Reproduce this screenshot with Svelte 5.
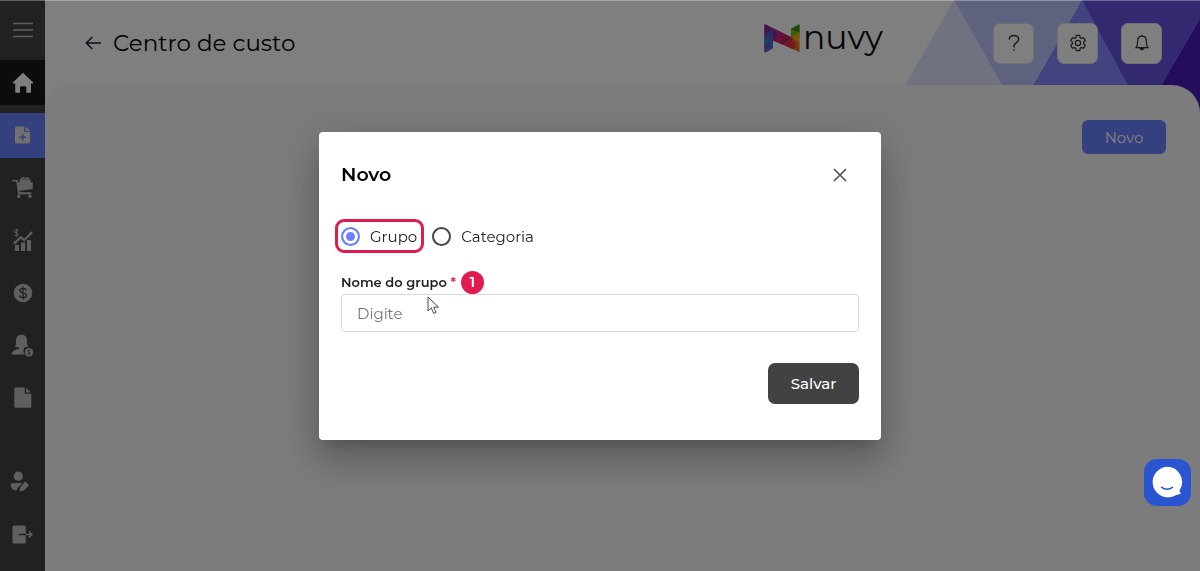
<script lang="ts">
  let kind = $state('grupo');
  let name = $state('');
</script>

<div class="app">
  <aside class="sidebar">
    <button class="side-btn menu" aria-label="Menu">
      <svg width="20" height="18" viewBox="0 0 20 18" stroke="currentColor" stroke-width="1.700"><path d="M0 2.500h20M0 9h20M0 15.500h20" /></svg>
    </button>
    <nav class="main-nav">
      <a class="side-btn home" href="#inicio" aria-label="Início">
        <svg width="22" height="22" viewBox="0 0 22 22" fill="currentColor"><path d="M11 .8 21.2 10.600q.5.7-.5.9H19v8.300q0 1-1 1h-3.700V15.500q0-1.200-1.200-1.200H9.200Q8 14.300 8 15.500v5.300H4.200q-1 0-1-1v-8.300H1.300q-1-.2-.5-.9z" /></svg>
      </a>
      <a class="side-btn current" href="#cadastros" aria-label="Cadastros">
        <svg width="16" height="18" viewBox="0 0 16 18" fill="currentColor"><path fill-rule="evenodd" d="M1.500.5H9v4.700q0 .8.800.8H15v10q0 1.500-1.500 1.500h-12Q0 17.500 0 16V2Q0 .5 1.500.5zM6.800 8v2.500H4.300v1.600h2.500v2.500h1.600v-2.500h2.500v-1.600H8.400V8z" /><path d="M10.300.6 15 4.900h-4.700z" /></svg>
      </a>
      <a class="side-btn" href="#compras" aria-label="Compras">
        <svg width="22" height="23" viewBox="0 0 22 23" fill="currentColor"><path d="M1 4.800h4l1.800 12.300h12" fill="none" stroke="currentColor" stroke-width="1.600" stroke-linecap="round" /><path d="M5 6.200h15.800V13L6.300 15zM7.500 3.300h11v3h-11zM9 1.300h3l1 1 1-1h3v1.500H9z" /><circle cx="6.700" cy="20.300" r="1.700" /><circle cx="18" cy="20.300" r="1.700" /><path d="M6 16.800h12.500v1.600H6z" /></svg>
      </a>
      <a class="side-btn" href="#vendas" aria-label="Vendas">
        <svg width="20" height="24" viewBox="0 0 20 24" fill="currentColor"><path d="M2 17h4v6H2zM8 14.500h4.200V23H8zM14 12h4v11h-4z" /><path d="m2 14.500 6-5.300 3.200 3L18 5.300" fill="none" stroke="currentColor" stroke-width="2" /><circle cx="18" cy="5" r="1.500" /><circle cx="2" cy="14.500" r="1.500" /><path d="M5.400 3.200C4.700 1.500 1.200 1.600 1.300 3.400c0 2 4.200 1 4.200 3.100C5.400 8.300 1.700 8.300 1 6.500M3.400.7v8.500" fill="none" stroke="currentColor" stroke-width="1" /></svg>
      </a>
      <a class="side-btn" href="#financeiro" aria-label="Financeiro">
        <svg width="20" height="20" viewBox="0 0 20 20"><circle cx="10" cy="10" r="9.300" fill="currentColor" /><path d="M13.300 7.300c-.5-2.600-6.300-2.700-6.400.2 0 3 6.600 1.600 6.500 4.900-.2 3-6.500 2.900-6.900.1M10 3.500v13" fill="none" stroke="#424242" stroke-width="1.300" /></svg>
      </a>
      <a class="side-btn" href="#clientes" aria-label="Clientes">
        <svg width="23" height="23" viewBox="0 0 23 23" fill="currentColor"><path d="M10.500.7c4 0 5.600 2.700 5.500 6 0 3 .3 5 1.200 6l-4.200.7v1.700c-.5.800-.6 1.600-.5 2.300.1 1.500.5 2.300 1.100 3.100H.8c0-4.500 4.200-4.600 7.200-5.800v-1.300l-4.200-.7c1-1.200 1.200-3 1.200-6 0-3.500 1.600-6 5.500-6z" /><circle cx="18" cy="18.300" r="4.200" /><path d="M19.400 17c-.3-1.100-2.800-1.100-2.800.1s2.900.9 2.800 2.200c0 1.200-2.700 1.300-3 .1" fill="none" stroke="#424242" stroke-width=".9" /></svg>
      </a>
      <a class="side-btn" href="#documentos" aria-label="Documentos">
        <svg width="18" height="21" viewBox="0 0 18 21" fill="currentColor"><path d="M1.500.5h9.200v6.200h6.600v12.800q0 1.200-1.200 1.200H1.500q-1.200 0-1.200-1.200V1.700Q.3.500 1.500.5z" /><path d="m12 .9 4.900 4.700H12z" /></svg>
      </a>
    </nav>
    <nav class="foot-nav">
      <a class="side-btn" href="#perfil" aria-label="Perfil">
        <svg class="profile" width="20" height="21" viewBox="0 0 20 21" fill="currentColor"><circle cx="8.300" cy="5.200" r="4.600" /><path d="M4 12h8.500L7.400 17.200 7 19.500C3 19.300.6 17 .7 14c.1-1.400 1.400-2 3.300-2z" /><path d="m15 10.500 3 2.600c.8.700.7 1.500 0 2.300l-4.200 4.200-4.300 1 .8-4.400z" /></svg>
      </a>
      <a class="side-btn" href="#sair" aria-label="Sair">
        <svg width="21" height="19" viewBox="0 0 21 19" fill="currentColor"><path d="M2 .6h10.300q1.500 0 1.500 1.500v6.600H7v1.600h6.800V17q0 1.500-1.500 1.500H2Q.5 18.500.5 17V2.100Q.5.600 2 .6z" /><path d="M14 9.500h5.700M17 6.600l2.900 2.900-2.900 2.900" fill="none" stroke="currentColor" stroke-width="1.500" /></svg>
      </a>
    </nav>
  </aside>

  <div class="page">
    <svg class="backdrop-art" width="295" height="115" viewBox="905 0 295 115" aria-hidden="true">
      <path fill="#e2e5ff" d="m954 0 49 85v30H888z" />
      <path fill="#bcc4ff" d="M954 0h128l-49 85v30h-14z" />
      <path fill="#8688ff" d="m1082 0 65 115h-131z" />
      <path fill="#6652e2" d="M1082 0h118v18l-56 97z" />
      <path fill="#4a1abc" d="M1200 18v97h-56z" />
    </svg>
    <header class="topbar">
      <button class="back" aria-label="Voltar">
        <svg width="17" height="14" viewBox="0 0 17 14" fill="none" stroke="currentColor" stroke-width="1.500"><path d="M16 7H1.500M7.300 1 1.300 7l6 6" /></svg>
      </button>
      <h1>Centro de custo</h1>
      <div class="logo">
        <svg width="36" height="29" viewBox="0 0 36 29" aria-hidden="true">
          <defs>
            <clipPath id="mark"><path d="M1.500.3 27 13V4.500L34.500.4q1-.2 1 .8v26q0 1-1 .6L9 16.500V24l-7.500 4.500q-1 0-1-1V1.300q0-1 1-1z" /></clipPath>
          </defs>
          <g clip-path="url(#mark)">
            <path fill="#b31a9b" d="M0 0h18v29H0z" />
            <path fill="#8427a0" d="M0 0v13l9-7zM9 5v12l9-6z" />
            <path fill="#4f5fbe" d="m0 12 9-7v19l-9 5z" />
            <path fill="#3f7bc4" d="m0 13 9 4-9 6z" />
            <path fill="#5966dd" d="m0 29 9-12v9z" />
            <path fill="#d71e7a" d="m9 5 9 4v12l-9-5 5-5z" />
            <path fill="#e62b50" d="M18 8h9v18l-9-6z" />
            <path fill="#bb2463" d="m18 9 9 4-9 8z" />
            <path fill="#79b51c" d="M27 0h9v14h-9z" />
            <path fill="#38961a" d="m27 5 9-5v9z" />
            <path fill="#edb200" d="m27 13 9-5v12z" />
            <path fill="#ed701b" d="m27 13 9 6v10l-9-5z" />
            <path fill="#de3f20" d="m27 13 5 8-5 8z" />
          </g>
        </svg>
        <span>nuvy</span>
      </div>
      <div class="tools">
        <button aria-label="Ajuda">
          <svg width="14" height="18" viewBox="0 0 14 18" fill="none" stroke="currentColor" stroke-width="1.400"><path d="M2.300 5.500C2.300 3 4.400 1.500 7 1.500S11.700 3.200 11.700 5.500c0 3-4.700 3.300-4.700 6.500v1.600" /><path d="M7 15.200v1.500" /></svg>
        </button>
        <button aria-label="Configurações">
          <svg width="18" height="18" viewBox="0 0 18 18" fill="none" stroke="currentColor" stroke-width="1.200" stroke-linejoin="round"><circle cx="9" cy="9" r="2.600" /><path d="M7.300 1.400h3.400l.5 2.300 1.200.7 2.200-.7 1.700 2.900-1.700 1.600v1.600l1.700 1.600-1.700 2.900-2.200-.7-1.200.7-.5 2.300H7.300l-.5-2.300-1.200-.7-2.200.7-1.700-2.900 1.700-1.600V8.200L1.700 6.600l1.700-2.900 2.200.7 1.200-.7z" /></svg>
        </button>
        <button aria-label="Notificações">
          <svg width="14" height="18" viewBox="0 0 14 18" fill="none" stroke="currentColor" stroke-width="1.200"><path d="M7 2.200c-3 0-4.300 2.200-4.300 4.600 0 4-.5 5.200-1.700 6.900h12c-1.200-1.700-1.700-2.900-1.700-6.900C11.300 4.400 10 2.200 7 2.200zM7 .8v1.400" /><path d="M5.200 14.500q1.800 2.600 3.600 0z" fill="currentColor" /></svg>
        </button>
      </div>
    </header>
    <main class="content">
      <button class="new">Novo</button>
    </main>
  </div>
</div>

<div class="overlay">
  <form class="modal" onsubmit={(e) => e.preventDefault()}>
    <div class="modal-head">
      <h2>Novo</h2>
      <button type="button" class="close" aria-label="Fechar">
        <svg width="14" height="14" viewBox="0 0 14 14" stroke="currentColor" stroke-width="1.700"><path d="m1 1 12 12M13 1 1 13" /></svg>
      </button>
    </div>
    <div class="radios">
      <label class="marked"><input type="radio" name="tipo" value="grupo" bind:group={kind} />Grupo</label>
      <label><input type="radio" name="tipo" value="categoria" bind:group={kind} />Categoria</label>
    </div>
    <div class="field-head">
      <label for="nome">Nome do grupo <span class="required">*</span></label>
      <span class="step">1</span>
    </div>
    <input id="nome" class="text" type="text" placeholder="Digite" bind:value={name} />
    <div class="actions"><button class="save">Salvar</button></div>
    <svg class="pointer" width="13" height="19" viewBox="0 0 13 19" aria-hidden="true"><path d="M1 1v14l3.300-3 2.400 5.400 2.400-1-2.400-5.300h4.800z" fill="#fff" stroke="#444b57" /></svg>
  </form>
</div>

<button class="chat" aria-label="Abrir conversa">
  <svg width="34" height="34" viewBox="0 0 34 34"><path fill="#fff" d="M16 .8a15.200 15.200 0 0 1 12.700 23.400c-.5 1-.2 1.600.7 2.300.6.500.4 1.200-.4 1.500l-3.700.9A15.300 15.300 0 1 1 16 .8z" /><path d="M10.500 21.300q5.500 3.700 11 0" fill="none" stroke="#2955d0" stroke-width="1.500" stroke-linecap="round" /></svg>
</button>

<style>
  :global(body) {
    margin: 0;
    background: #fff;
    font-family: Montserrat, Inter, sans-serif;
  }
  button,
  input {
    font-family: inherit;
  }
  button {
    border: 0;
    padding: 0;
    background: none;
    cursor: pointer;
  }
  svg {
    display: block;
    flex: none;
  }
  .app {
    display: flex;
    min-height: 100vh;
  }
  .sidebar {
    display: flex;
    flex-direction: column;
    flex: none;
    width: 45px;
    background: #424242;
  }
  .side-btn {
    display: flex;
    align-items: center;
    justify-content: center;
    width: 45px;
    height: 45px;
    color: #bebebe;
  }
  .menu {
    height: 60px;
  }
  .main-nav {
    display: flex;
    flex-direction: column;
    justify-content: space-between;
    height: 360px;
  }
  .home {
    background: #181818;
    color: #fff;
  }
  .current {
    background: #6b80ff;
    color: #e0e0e0;
  }
  .foot-nav {
    display: flex;
    flex-direction: column;
    gap: 8px;
    margin-top: auto;
    padding-bottom: 14px;
  }
  .profile {
    margin-right: 5px;
  }
  .page {
    position: relative;
    display: flex;
    flex: 1;
    flex-direction: column;
    min-width: 0;
  }
  .backdrop-art {
    position: absolute;
    top: 0;
    right: 0;
  }
  .topbar {
    position: relative;
    display: flex;
    align-items: center;
    height: 85px;
    padding: 1px 38px 0 40px;
    box-sizing: border-box;
  }
  .back {
    color: #2b1540;
  }
  h1 {
    margin: 0 0 0 11px;
    font-size: 23px;
    font-weight: 400;
    line-height: 32px;
    color: #000;
  }
  .logo {
    display: flex;
    align-items: flex-start;
    gap: 3px;
    height: 29px;
    margin: 0 110px 9px auto;
  }
  .logo span {
    font-size: 33px;
    line-height: 26px;
    color: #111;
  }
  .tools {
    display: flex;
    gap: 23px;
  }
  .tools button {
    display: flex;
    align-items: center;
    justify-content: center;
    width: 41px;
    height: 41px;
    border: 1px solid #e2e2ea;
    border-radius: 7px;
    background: #fff;
    color: #333;
  }
  .content {
    position: relative;
    flex: 1;
    padding: 35px 34px;
    border-radius: 28px 28px 0 0;
    background: #f8f8f8;
    text-align: right;
  }
  .new {
    width: 84px;
    height: 34px;
    border-radius: 6px;
    background: #6b80ff;
    color: #fff;
    font-size: 15px;
  }
  .overlay {
    position: fixed;
    inset: 0;
    display: flex;
    align-items: center;
    justify-content: center;
    border-top: 1px solid rgba(255, 255, 255, 0.3);
    background: rgba(0, 0, 0, 0.5);
  }
  .modal {
    position: relative;
    box-sizing: border-box;
    width: 100%;
    max-width: 562px;
    padding: 22px 22px 36px;
    border-radius: 4px;
    background: #fff;
    box-shadow:
      0 11px 15px -7px rgba(0, 0, 0, 0.2),
      0 24px 38px 3px rgba(0, 0, 0, 0.14),
      0 9px 46px 8px rgba(0, 0, 0, 0.12);
    color: #222;
  }
  .modal-head {
    display: flex;
    align-items: center;
    justify-content: space-between;
    height: 41px;
  }
  h2 {
    margin: 0;
    font-size: 19px;
    font-weight: 600;
    line-height: 24px;
    color: #000;
  }
  .close {
    display: flex;
    align-items: center;
    justify-content: center;
    width: 38px;
    height: 38px;
    color: #555;
  }
  .radios {
    display: flex;
    gap: 8px;
    margin: 24px 0 0 -6px;
  }
  .radios label {
    display: flex;
    align-items: center;
    gap: 10px;
    box-sizing: border-box;
    height: 34px;
    font-size: 15px;
  }
  .radios .marked {
    padding: 0 4px 0 3px;
    border: 3px solid #e01b4f;
    border-radius: 9px;
  }
  .radios input {
    appearance: none;
    box-sizing: border-box;
    width: 19px;
    height: 19px;
    margin: 0;
    border: 2px solid #444;
    border-radius: 50%;
  }
  .radios input:checked {
    border-color: #6b80ff;
    background: #6b80ff;
    box-shadow: inset 0 0 0 3px #fff;
  }
  .field-head {
    display: flex;
    align-items: center;
    gap: 5px;
    height: 20px;
    margin: 19px 0 2px;
    font-size: 13px;
    font-weight: 600;
    line-height: 20px;
  }
  .required {
    color: #e01b4f;
  }
  .step {
    display: flex;
    align-items: center;
    justify-content: center;
    width: 23px;
    height: 23px;
    border-radius: 50%;
    background: #e01b4f;
    color: #fff;
    font-size: 15px;
  }
  .text {
    display: block;
    box-sizing: border-box;
    width: 100%;
    height: 38px;
    padding: 0 15px;
    border: 1px solid #d9d9d9;
    border-radius: 4px;
    background: #fff;
    color: #222;
    font-size: 15px;
  }
  .text::placeholder {
    color: #757575;
  }
  .actions {
    display: flex;
    justify-content: flex-end;
    margin-top: 31px;
  }
  .save {
    width: 91px;
    height: 41px;
    border-radius: 7px;
    background: #424242;
    color: #fff;
    font-size: 15px;
    font-weight: 500;
  }
  .pointer {
    position: absolute;
    top: 164px;
    left: 108px;
  }
  .chat {
    position: fixed;
    right: 9px;
    bottom: 65px;
    display: flex;
    align-items: center;
    justify-content: center;
    width: 47px;
    height: 47px;
    border-radius: 13px;
    background: #2955d0;
  }
</style>
